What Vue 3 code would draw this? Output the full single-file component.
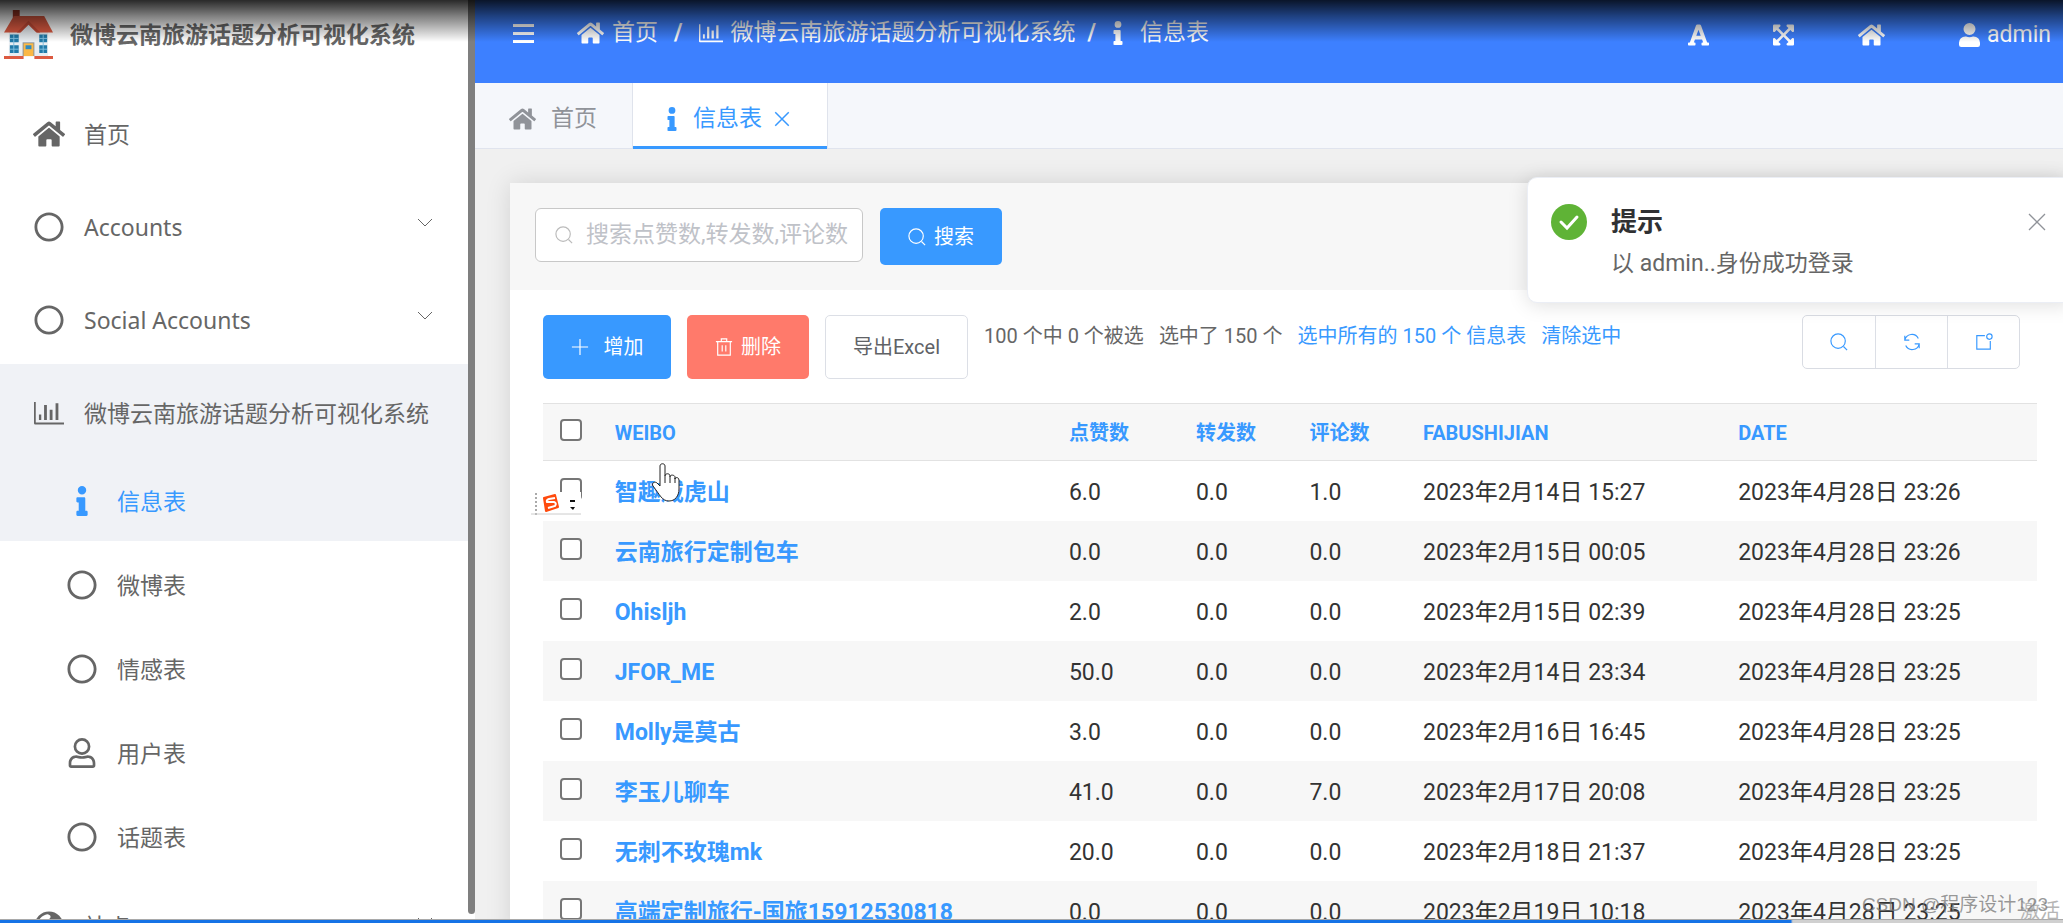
<script setup>
import { ref } from 'vue'

const icons = {
  home: { box: '0 0 576 512', d: 'M280.4 148.3 96 300.1V464a16 16 0 0 0 16 16h112a16 16 0 0 0 16-16v-96a16 16 0 0 1 16-16h64a16 16 0 0 1 16 16v96a16 16 0 0 0 16 16h112a16 16 0 0 0 16-16V300L295.7 148.3a12.2 12.2 0 0 0-15.3 0zM571.6 251.5 488 182.600V44a12 12 0 0 0-12-12h-56a12 12 0 0 0-12 12v72.600L318.500 43a48 48 0 0 0-61 0L4.300 251.500a12 12 0 0 0-1.600 16.900l25.500 31a12 12 0 0 0 16.900 1.600l235.200-193.700a12.200 12.200 0 0 1 15.300 0l235.200 193.700a12 12 0 0 0 16.900-1.600l25.500-31a12 12 0 0 0-1.700-16.900z' },
  circle: { box: '0 0 512 512', d: 'M256 8C119 8 8 119 8 256s111 248 248 248 248-111 248-248S393 8 256 8zm0 448c-110.500 0-200-89.500-200-200S145.500 56 256 56s200 89.500 200 200-89.500 200-200 200z' },
  chart: { box: '0 0 512 512', d: 'M0 70h30v348h482v36H22a22 22 0 0 1-22-22zM84 280h40v94H84zM172 120h48v254h-48zM268 200h48v174h-48zM368 88h48v286h-48z' },
  info: { box: '0 0 192 512', d: 'M20 424.200h20V279.800H20c-11 0-20-9-20-20V212c0-11 9-20 20-20h112c11 0 20 9 20 20v212.200h20c11 0 20 9 20 20V492c0 11-9 20-20 20H20c-11 0-20-9-20-20v-47.800c0-11 9-20 20-20zM96 0a72 72 0 1 0 0 144A72 72 0 0 0 96 0z' },
  person: { box: '0 0 512 512', d: 'M256 0a144 144 0 1 0 0 288 144 144 0 0 0 0-288zm0 46a98 98 0 1 1 0 196 98 98 0 0 1 0-196zM160 296C80 296 28 354 28 432v38c0 24 18 42 42 42h372c24 0 42-18 42-42v-38c0-78-52-136-132-136-28 0-50 16-96 16s-68-16-96-16zm0 46c24 0 46 14 96 14s72-14 96-14c52 0 86 38 86 90v34H74v-34c0-52 34-90 86-90z' },
  user: { box: '0 0 448 512', d: 'M224 256a128 128 0 1 0 0-256 128 128 0 0 0 0 256zm89.600 32h-16.700a174 174 0 0 1-145.800 0h-16.700A134.400 134.400 0 0 0 0 422.400V464a48 48 0 0 0 48 48h352a48 48 0 0 0 48-48v-41.600A134.400 134.400 0 0 0 313.600 288z' },
  globe: { box: '0 0 512 512', d: 'M256 8a248 248 0 1 0 0 496 248 248 0 0 0 0-496zm-20 48c30 10 54 24 44 56s-60 34-54 76 60 36 54 84-58 58-62 100-20 62-40 56c-30-28-20-88-50-122s-70-38-72-58C70 140 140 66 236 56z' },
  expand: { box: '0 0 448 512', d: 'M448 344v112a24 24 0 0 1-24 24H312c-21.400 0-32.100-25.900-17-41l36.200-36.200L224 295.600 116.800 402.900 153 439c15.100 15.100 4.400 41-17 41H24a24 24 0 0 1-24-24V344c0-21.400 25.900-32.100 41-17l36.200 36.200L184.500 256 77.200 148.700 41 185c-15.100 15.100-41 4.400-41-17V56a24 24 0 0 1 24-24h112c21.400 0 32.100 25.900 17 41l-36.200 36.200L224 216.400l107.200-107.300L295 73c-15.100-15.100-4.400-41 17-41h112a24 24 0 0 1 24 24v112c0 21.400-25.900 32.100-41 17l-36.200-36.200L263.500 256l107.300 107.300L407 327c15.100-15.100 41-4.400 41 17z' },
  font: { box: '0 0 448 512', d: 'M432 416h-23.400L277.900 53.700A32 32 0 0 0 247.600 32h-47.200a32 32 0 0 0-30.300 21.700L39.400 416H16a16 16 0 0 0-16 16v32a16 16 0 0 0 16 16h128a16 16 0 0 0 16-16v-32a16 16 0 0 0-16-16h-19.600l23.300-64h152.600l23.300 64H304a16 16 0 0 0-16 16v32a16 16 0 0 0 16 16h128a16 16 0 0 0 16-16v-32a16 16 0 0 0-16-16zM176.800 272 224 142.500 271.200 272z' },
}

const menu = [
  { label: '首页', icon: 'home' },
  { label: 'Accounts', icon: 'circle', arrow: true },
  { label: 'Social Accounts', icon: 'circle', arrow: true },
  {
    label: '微博云南旅游话题分析可视化系统', icon: 'chart', open: true,
    children: [
      { label: '信息表', icon: 'info', active: true },
      { label: '微博表', icon: 'circle' },
      { label: '情感表', icon: 'circle' },
      { label: '用户表', icon: 'person' },
      { label: '话题表', icon: 'circle' },
    ],
  },
  { label: '站点', icon: 'globe', arrow: true },
]

const columns = ['WEIBO', '点赞数', '转发数', '评论数', 'FABUSHIJIAN', 'DATE']
const rows = [
  ['智趣威虎山', '6.0', '0.0', '1.0', '2023年2月14日 15:27', '2023年4月28日 23:26'],
  ['云南旅行定制包车', '0.0', '0.0', '0.0', '2023年2月15日 00:05', '2023年4月28日 23:26'],
  ['Ohisljh', '2.0', '0.0', '0.0', '2023年2月15日 02:39', '2023年4月28日 23:25'],
  ['JFOR_ME', '50.0', '0.0', '0.0', '2023年2月14日 23:34', '2023年4月28日 23:25'],
  ['Molly是莫古', '3.0', '0.0', '0.0', '2023年2月16日 16:45', '2023年4月28日 23:25'],
  ['李玉儿聊车', '41.0', '0.0', '7.0', '2023年2月17日 20:08', '2023年4月28日 23:25'],
  ['无刺不玫瑰mk', '20.0', '0.0', '0.0', '2023年2月18日 21:37', '2023年4月28日 23:25'],
  ['高端定制旅行-国旅15912530818', '0.0', '0.0', '0.0', '2023年2月19日 10:18', '2023年4月28日 23:25'],
]
const keyword = ref('')
</script>

<template>
  <div class="app">
    <aside class="sidebar">
      <div class="brand">
        <svg class="logo" viewBox="0 0 50 50" aria-hidden="true">
          <path fill="#a83a28" d="M9 0h7v8H9z" />
          <path fill="#e8edf1" d="M5 20h40v27H5z" />
          <path fill="#dc5a41" d="M10 6h31l9 17H0z" />
          <path fill="#c24a35" d="m25 11 12 12H13z" />
          <path fill="#e8edf1" d="m25 15 9 9H16z" />
          <path fill="#217aa8" d="M6 25h9v8H6zm0 11h9v8H6zm30-11h8v8h-8zm0 11h8v8h-8z" />
          <path stroke="#7fc0e0" d="M10 25v19M6 29h9M6 40h9M40 25v19M36 29h8M36 40h8" />
          <path fill="#8a9299" d="M19 33h12v14H19z" />
          <path fill="#fbb845" d="M20 34h10v13H20z" />
          <path fill="#2d8ac0" d="M22 36h6v4h-6z" />
          <path fill="#dc5a41" d="M0 47h20v3H0zm31 0h19v3H31z" />
        </svg>
        <strong>微博云南旅游话题分析可视化系统</strong>
      </div>
      <nav>
        <template v-for="item in menu" :key="item.label">
          <a href="#" class="item" :class="{ open: item.open }">
            <svg class="ico" :viewBox="icons[item.icon].box"><path :d="icons[item.icon].d" /></svg>
            <span>{{ item.label }}</span>
            <svg v-if="item.arrow" class="arrow" viewBox="0 0 16 16"><path d="m1 4 7 7 7-7" /></svg>
          </a>
          <a v-for="sub in item.children" :key="sub.label" href="#" class="item sub" :class="{ active: sub.active }">
            <svg class="ico" :viewBox="icons[sub.icon].box"><path :d="icons[sub.icon].d" /></svg>
            <span>{{ sub.label }}</span>
          </a>
        </template>
      </nav>
    </aside>
    <div class="scrollbar"></div>

    <div class="main">
      <header class="topbar">
        <button class="plain" aria-label="菜单">
          <svg class="burger" viewBox="0 0 21 20"><path d="M0 0h21v3H0zm0 8h21v3H0zm0 8h21v3H0z" /></svg>
        </button>
        <nav class="crumbs">
          <a href="#"><svg class="i-home" :viewBox="icons.home.box"><path :d="icons.home.d" /></svg>首页</a>
          <b class="wide">/</b>
          <a href="#"><svg class="i-chart" :viewBox="icons.chart.box"><path :d="icons.chart.d" /></svg>微博云南旅游话题分析可视化系统</a>
          <b>/</b>
          <a href="#" class="last"><svg class="i-info" :viewBox="icons.info.box"><path :d="icons.info.d" /></svg>信息表</a>
        </nav>
        <div class="tools">
          <button class="plain" aria-label="字体"><svg class="i-tool" :viewBox="icons.font.box"><path :d="icons.font.d" /></svg></button>
          <button class="plain" aria-label="全屏"><svg class="i-tool" :viewBox="icons.expand.box"><path :d="icons.expand.d" /></svg></button>
          <button class="plain" aria-label="主页"><svg class="i-home" :viewBox="icons.home.box"><path :d="icons.home.d" /></svg></button>
          <button class="plain account"><svg class="i-tool" :viewBox="icons.user.box"><path :d="icons.user.d" /></svg>admin</button>
        </div>
      </header>

      <div class="tabs">
        <a href="#" class="tab"><svg class="i-home" :viewBox="icons.home.box"><path :d="icons.home.d" /></svg>首页</a>
        <a href="#" class="tab current">
          <svg class="i-info" :viewBox="icons.info.box"><path :d="icons.info.d" /></svg>信息表
          <svg class="line cross" viewBox="0 0 16 16"><path d="m2 2 12 12M14 2 2 14" /></svg>
        </a>
      </div>

      <main class="content">
        <section class="card">
          <form class="search" @submit.prevent>
            <label class="field">
              <svg class="line" viewBox="0 0 20 20"><circle cx="9" cy="9" r="8" /><path d="m15 15 4 4" /></svg>
              <input v-model="keyword" type="text" placeholder="搜索点赞数,转发数,评论数" aria-label="搜索" />
            </label>
            <button class="btn blue find">
              <svg class="line" viewBox="0 0 20 20"><circle cx="9" cy="9" r="8" /><path d="m15 15 4 4" /></svg>搜索
            </button>
          </form>

          <div class="body">
            <div class="actions">
              <button class="btn blue add"><svg class="line" viewBox="0 0 20 20"><path d="M10 1v18M1 10h18" /></svg>增加</button>
              <button class="btn red"><svg class="line" viewBox="0 0 20 20"><path d="M1 4h18M7 4V1h6v3M3 4v15h14V4M8 8v7M12 8v7" /></svg>删除</button>
              <button class="btn white">导出Excel</button>
              <p class="status">
                <span>100 个中 0 个被选</span>
                <span>选中了 150 个</span>
                <a href="#">选中所有的 150 个 信息表</a>
                <a href="#">清除选中</a>
              </p>
              <div class="group">
                <button aria-label="搜索"><svg class="line" viewBox="0 0 20 20"><circle cx="9" cy="9" r="8" /><path d="m15 15 4 4" /></svg></button>
                <button aria-label="刷新"><svg class="line" viewBox="0 0 20 20"><path d="M2 3v5h5M2 8a8 8 0 0 1 15-2M18 17v-5h-5M18 12a8 8 0 0 1-15 2" /></svg></button>
                <button aria-label="导出"><svg class="line" viewBox="0 0 20 20"><path d="M11 3H2v15h15V9" /><circle cx="16" cy="4" r="3" /></svg></button>
              </div>
            </div>

            <table>
              <colgroup>
                <col class="c-check" /><col class="c-name" /><col class="c-like" /><col class="c-num" /><col class="c-num" /><col class="c-date" /><col />
              </colgroup>
              <thead>
                <tr>
                  <th><input type="checkbox" aria-label="全选" /></th>
                  <th v-for="c in columns" :key="c"><a href="#">{{ c }}</a></th>
                </tr>
              </thead>
              <tbody>
                <tr v-for="row in rows" :key="row[0]">
                  <td><input type="checkbox" :aria-label="row[0]" /></td>
                  <td v-for="(cell, i) in row" :key="i">
                    <a v-if="i === 0" href="#">{{ cell }}</a>
                    <template v-else>{{ cell }}</template>
                  </td>
                </tr>
              </tbody>
            </table>
          </div>
        </section>
      </main>
    </div>

    <div class="notice" role="alert">
      <svg class="ok" viewBox="0 0 36 36"><circle cx="18" cy="18" r="18" /><path d="m10 18 6 6 10-11" /></svg>
      <div class="msg">
        <h2>提示</h2>
        <p>以 admin..身份成功登录</p>
      </div>
      <button class="plain" aria-label="关闭"><svg class="line" viewBox="0 0 18 18"><path d="m1 1 16 16M17 1 1 17" /></svg></button>
    </div>

    <div class="ime">
      <svg viewBox="0 0 50 24">
        <path d="M5 1v22" stroke="#aaa" stroke-width="2" stroke-dasharray="2 2" />
        <path d="M0 22h50" stroke="#ccc" />
        <path d="m13 6 11-3 3 12-12 4z" fill="#ff4a0d" stroke="#ff4a0d" stroke-width="2" stroke-linejoin="round" />
        <path d="m24 6-6 1q-3 1-2 3l7 0q3 1 1 4l-7 2" fill="none" stroke="#fff" stroke-width="2" />
        <path d="M39 8h5v2h-5zM39 15h5l-2 3z" />
      </svg>
    </div>
    <svg class="hand" viewBox="0 0 30 40">
      <path d="M9 3c0-3 5-3 5 0v10c0-3 5-3 5 0v1c0-3 5-2 5 0v2c0-2 4-2 4 1v9c0 7-4 12-10 12-7 0-9-6-16-15-2-3 2-5 4-3l3 3z" fill="#fff" stroke="#222" />
      <path d="M14 13v7m5-6v6m5-5v5" stroke="#222" fill="none" />
    </svg>
    <div class="shade"></div>
    <div class="progress"></div>
    <div class="activate">激活</div>
    <div class="watermark">CSDN @程序设计123</div>
  </div>
</template>

<style>
body { margin: 0; overflow: hidden; }
</style>

<style scoped>
* { box-sizing: border-box; }
.app { position: relative; display: flex; height: 100vh; overflow: hidden; background: #fff; font: 23px/30px Roboto, "Noto Sans CJK SC", sans-serif; color: #333; }
a { color: inherit; text-decoration: none; }
button, input { font: inherit; }
svg { flex: none; fill: currentColor; }
.line { fill: none; stroke: currentColor; stroke-width: 1.3; width: 18px; height: 18px; }
.plain { display: flex; align-items: center; border: 0; padding: 0; background: none; color: inherit; }

.sidebar { width: 468px; flex: none; color: #666; font-family: "Noto Sans", "Noto Sans CJK SC", sans-serif; }
.brand { display: flex; align-items: center; gap: 17px; height: 85px; padding: 0 0 17px 4px; }
.brand strong { white-space: nowrap; }
.logo { width: 49px; height: 49px; }
.item { display: flex; align-items: center; gap: 19px; height: 93px; padding: 4px 35px 0 33px; white-space: nowrap; }
.item .ico { width: 32px; height: 30px; }
.item.open, .item.active { background: #f0f2f6; }
.item.sub { height: 84px; padding-left: 66px; }
.item.active { color: #3899ff; }
.arrow { width: 16px; height: 16px; margin: -8px 0 0 auto; fill: none; stroke: currentColor; }
.scrollbar { width: 7px; flex: none; margin-bottom: 9px; background: #7f7f7f; border-radius: 0 0 4px 4px; }

.main { flex: 1; min-width: 0; display: flex; flex-direction: column; }
.topbar { display: flex; align-items: center; height: 83px; flex: none; padding: 0 12px 16px 38px; background: #3d80ff; color: #fff; }
.burger { width: 21px; height: 20px; }
.crumbs { display: flex; align-items: center; margin-left: 43px; padding-bottom: 2px; white-space: nowrap; }
.crumbs a { display: flex; align-items: center; gap: 8px; }
.crumbs b { margin: 0 8px 0 12px; }
.crumbs b.wide { margin: 0 16px; }
.crumbs .last { gap: 16px; margin-left: 8px; }
.i-home { width: 27px; height: 24px; }
.i-chart { width: 24px; height: 24px; }
.i-info { width: 12px; height: 24px; }
.i-tool { width: 21px; height: 24px; }
.tools { display: flex; align-items: center; margin-left: auto; gap: 64px; padding-top: 2px; }
.account { gap: 7px; margin-left: 10px; }

.tabs { display: flex; height: 66px; flex: none; background: #f5f7fb; border-bottom: 1px solid #e0e4ee; }
.tab { display: flex; align-items: center; gap: 15px; padding: 6px 35px 0 34px; color: #909399; }
.current { height: 66px; padding: 6px 36px 0 33px; background: #fff; color: #3899ff; border: 1px solid #dfe3ec; border-width: 0 1px 0 1px; box-shadow: inset 0 -3px #3899ff; }
.cross { margin-left: -4px; }

.content { flex: 1; min-height: 0; padding: 34px 0 0 35px; background: #f0f0f0; overflow: hidden; }
.card { min-height: 100%; background: #fff; box-shadow: 0 0 24px rgba(0, 0, 0, .12); }
.search { display: flex; align-items: flex-start; gap: 17px; height: 107px; padding: 25px; background: #f7f7f7; }
.field { display: flex; align-items: center; gap: 13px; width: 328px; height: 54px; padding: 0 8px 0 19px; background: #fff; border: 1px solid #c8c8c8; border-radius: 6px; color: #bbb; }
.field input { flex: 1; min-width: 0; border: 0; padding: 0; outline: 0; background: none; color: #444; }
.field input::placeholder { color: #bfc2c8; opacity: 1; }
.btn { display: flex; align-items: center; justify-content: center; gap: 8px; height: 64px; padding: 0 28px; border: 0; border-radius: 5px; font-size: 20px; color: #fff; white-space: nowrap; }
.blue { background: #3899ff; }
.red { background: #ff7a6b; }
.white { padding: 0 27px; background: #fff; border: 1px solid #dcdfe6; color: #606266; }
.find { height: 57px; width: 122px; }
.add { width: 128px; gap: 15px; }
.body { padding: 25px 26px 0 33px; }
.actions { display: flex; gap: 16px; height: 88px; }
.status { display: flex; gap: 15px; margin: 6px 0 0; font-size: 20px; color: #666; white-space: nowrap; }
.status a { color: #3899ff; }
.group { display: flex; height: 54px; margin: 0 17px 0 auto; border: 1px solid #d9dce3; border-radius: 5px; background: #fff; overflow: hidden; }
.group button { display: flex; align-items: center; justify-content: center; width: 72px; border: 0; background: none; color: #3899ff; }
.group button + button { border-left: 1px solid #dcdfe6; }

table { width: 100%; table-layout: fixed; border-collapse: separate; border-spacing: 0; }
.c-check { width: 4%; }
.c-name { width: 30.4%; }
.c-like { width: 8.5%; }
.c-num { width: 7.6%; }
.c-date { width: 21.1%; }
th { height: 58px; padding: 2px 12px 0; text-align: left; font-size: 20px; background: #f7f7f7; border: 1px solid #e2e2e2; border-width: 1px 0; }
td { height: 60px; padding: 3px 12px 0; white-space: nowrap; }
th:first-child, td:first-child { padding: 0 0 5px 17px; line-height: 0; }
th a, td a { color: #3899ff; font-weight: 700; }
tbody tr:nth-child(even) { background: #f7f7f7; }
input[type="checkbox"] { appearance: none; width: 22px; height: 22px; margin: 0; vertical-align: middle; background: #fff; border: 2px solid #767676; border-radius: 4px; }

.notice { position: absolute; top: 177px; right: -8px; width: 544px; height: 126px; display: flex; align-items: flex-start; padding: 26px 24px 0 23px; background: #fff; border: 1px solid #ebeef5; border-radius: 10px 0 0 10px; box-shadow: 0 2px 20px rgba(0, 0, 0, .13); }
.ok { width: 36px; height: 36px; fill: #5fb336; }
.ok path { fill: none; stroke: #fff; stroke-width: 3; stroke-linecap: round; }
.msg { flex: 1; margin-left: 24px; }
.msg h2 { margin: 0; font-size: 26px; line-height: 36px; color: #303133; }
.msg p { margin: 9px 0 0; color: #666; }
.notice .plain { height: 36px; color: #909399; }

.ime { position: absolute; left: 531px; top: 492px; width: 50px; height: 24px; background: #fff; }
.ime svg { display: block; width: 50px; height: 24px; fill: #111; }
.hand { position: absolute; left: 651px; top: 463px; width: 30px; height: 40px; }
.shade { position: absolute; inset: 0 0 auto; height: 42px; background: linear-gradient(rgba(0, 0, 0, .84), rgba(0, 0, 0, .5) 38%, rgba(0, 0, 0, 0)); pointer-events: none; }
.progress { position: absolute; inset: auto 0 0; height: 4px; border-top: 1px solid #a9a9a9; background: linear-gradient(90deg, #1673e6 86.8%, #d0d0d0 86.9%); }
.watermark, .activate { position: absolute; right: 15px; bottom: 2px; font: 19px/32px "Liberation Sans", "Noto Sans CJK SC", sans-serif; color: rgba(120, 120, 120, .75); white-space: nowrap; }
.activate { right: 3px; bottom: 0; line-height: 24px; font-size: 20px; color: #b5b5b5; }
</style>
